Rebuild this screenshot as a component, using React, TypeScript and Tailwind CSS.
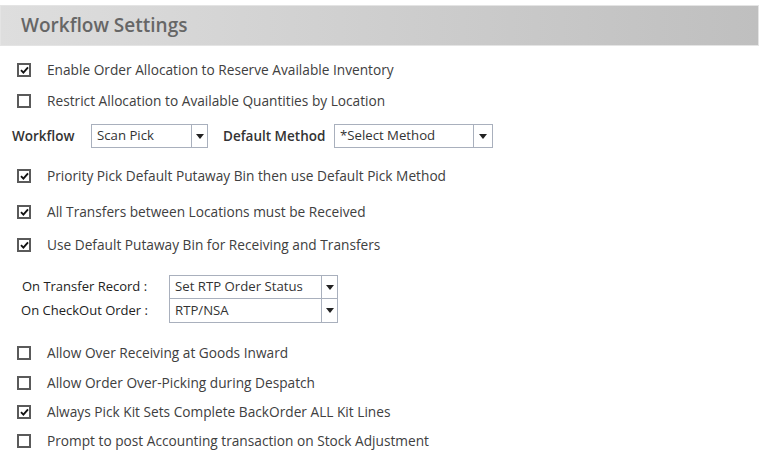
const font = { fontFamily: '"Open Sans", "Noto Sans", sans-serif' };

function CheckBox({ checked }: { checked: boolean }) {
  return (
    <span className="flex h-[14px] w-[14px] shrink-0 items-center justify-center border-2 border-[#5a5a5a] bg-white">
      {checked && (
        <svg width="9" height="8" viewBox="0 0 9 8">
          <path d="M1 4.2 L3.4 6.6 L8 1.4" fill="none" stroke="#111" strokeWidth="1.9" />
        </svg>
      )}
    </span>
  );
}

function CheckRow({ label, checked, className }: { label: string; checked: boolean; className: string }) {
  return (
    <div className={`flex h-6 items-center ${className}`}>
      <div className="ml-[17px] flex w-[30px] items-center">
        <CheckBox checked={checked} />
      </div>
      <span className="text-[13.7px] text-[#404040]">{label}</span>
    </div>
  );
}

function Select({ value, className, btn = 'w-[16px]' }: { value: string; className: string; btn?: string }) {
  return (
    <div className={`flex h-[24px] items-stretch border border-[#a9b0bd] bg-white ${className}`}>
      <span className="flex flex-1 items-center pl-[5px] text-[13.2px] text-[#333]">{value}</span>
      <span className={`flex items-center justify-center border-l border-[#a9b0bd] ${btn}`}>
        <svg width="8" height="5" viewBox="0 0 8 5">
          <path d="M0 0 H8 L4 5 Z" fill="#222" />
        </svg>
      </span>
    </div>
  );
}

export default function App() {
  return (
    <div className="h-[464px] w-[763px] overflow-hidden bg-white" style={font}>
      {/* Header */}
      <div className="mt-[5px] flex h-[41px] w-[759px] items-center border border-[#e4e4e4] bg-gradient-to-r from-[#dedede] to-[#bfbfbf] pl-[20px]">
        <span className="text-[19px] font-semibold text-[#666]">Workflow Settings</span>
      </div>

      <CheckRow className="mt-[12px]" checked label="Enable Order Allocation to Reserve Available Inventory" />
      <CheckRow className="mt-[7px]" checked={false} label="Restrict Allocation to Available Quantities by Location" />

      {/* Workflow */}
      <div className="mt-[11px] flex h-6 items-center">
        <span className="ml-[12px] w-[79px] text-[13.5px] font-semibold text-[#333]">Workflow</span>
        <Select className="w-[117px]" value="Scan Pick" />
        <span className="ml-[15px] w-[111px] text-[13.5px] font-semibold text-[#333]">Default Method</span>
        <Select className="w-[159px]" value="*Select Method" btn="w-[19px]" />
      </div>

      <CheckRow className="mt-[16px]" checked label="Priority Pick Default Putaway Bin then use Default Pick Method" />
      <CheckRow className="mt-[12px]" checked label="All Transfers between Locations must be Received" />
      <CheckRow className="mt-[9px]" checked label="Use Default Putaway Bin for Receiving and Transfers" />

      {/* Transfer / Checkout */}
      <div className="mt-[18px] flex flex-col">
        <div className="flex h-6 items-center">
          <span className="w-[169px] text-center text-[13px] font-medium text-[#222]">On Transfer Record :</span>
          <Select className="w-[169px]" value="Set RTP Order Status" />
        </div>
        <div className="-mt-px flex h-[25px] items-center">
          <span className="w-[169px] text-center text-[13px] font-medium text-[#222]">On CheckOut Order :</span>
          <Select className="h-[25px] w-[169px]" value="RTP/NSA" />
        </div>
      </div>

      <CheckRow className="mt-[18px]" checked={false} label="Allow Over Receiving at Goods Inward" />
      <CheckRow className="mt-[6px]" checked={false} label="Allow Order Over-Picking during Despatch" />
      <CheckRow className="mt-[5px]" checked label="Always Pick Kit Sets Complete BackOrder ALL Kit Lines" />
      <CheckRow className="mt-[5px]" checked={false} label="Prompt to post Accounting transaction on Stock Adjustment" />
    </div>
  );
}
